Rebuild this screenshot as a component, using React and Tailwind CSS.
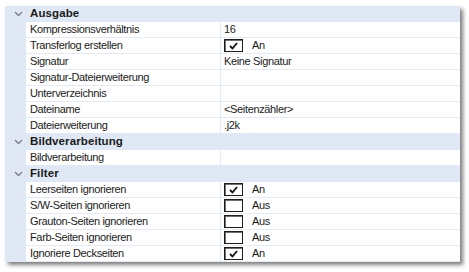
const SECTIONS = [
  {
    title: 'Ausgabe',
    rows: [
      { name: 'Kompressionsverhältnis', value: '16' },
      { name: 'Transferlog erstellen', check: true },
      { name: 'Signatur', value: 'Keine Signatur' },
      { name: 'Signatur-Dateierweiterung', value: '' },
      { name: 'Unterverzeichnis', value: '' },
      { name: 'Dateiname', value: '<Seitenzähler>' },
      { name: 'Dateierweiterung', value: '.j2k' },
    ],
  },
  {
    title: 'Bildverarbeitung',
    rows: [{ name: 'Bildverarbeitung', value: '' }],
  },
  {
    title: 'Filter',
    rows: [
      { name: 'Leerseiten ignorieren', check: true },
      { name: 'S/W-Seiten ignorieren', check: false },
      { name: 'Grauton-Seiten ignorieren', check: false },
      { name: 'Farb-Seiten ignorieren', check: false },
      { name: 'Ignoriere Deckseiten', check: true },
    ],
  },
];

const Chevron = () => (
  <svg width="9" height="6" viewBox="0 0 9 6" fill="none" stroke="#7a7f88" strokeWidth="1.3">
    <path d="M1 1l3.5 3.5L8 1" />
  </svg>
);

const CheckBox = ({ on }) => (
  <span className="flex items-center">
    <span className="w-[19px] h-[13px] border border-[#1c1c1c] shadow-[inset_1px_1px_0_#6e6e6e] bg-white flex items-center pl-[4px]">
      {on && (
        <svg width="9" height="8" viewBox="0 0 9 8">
          <path d="M1 4l2.5 2.5L8 1" fill="none" stroke="#111" strokeWidth="1.8" />
        </svg>
      )}
    </span>
    <span className="ml-[9px]">{on ? 'An' : 'Aus'}</span>
  </span>
);

export default function App() {
  return (
    <div className="w-[469px] h-[272px] bg-white pt-[6px] pl-[5px]" style={{ fontFamily: '"Liberation Sans", Arial, sans-serif' }}>
      <div className="w-[455px] bg-[#dfe8f4] shadow-[3px_3px_4px_rgba(0,0,0,0.5)] text-[11px] text-[#1a1a1a] leading-none">
        {SECTIONS.map((s) => (
          <div key={s.title}>
            <div className="h-4 flex items-center">
              <span className="w-[25px] flex justify-center pl-[2px]">
                <Chevron />
              </span>
              <span className="font-bold text-[11.5px] tracking-[0.1px]">{s.title}</span>
            </div>
            {s.rows.map((r) => (
              <div key={r.name} className="h-4 flex">
                <span className="w-[21px] shrink-0" />
                <div className="flex-1 flex bg-white border-b border-[#e2eaf5]">
                  <span className="w-[195px] shrink-0 pl-[4px] flex items-center border-r border-[#e2eaf5] tracking-[-0.35px]">
                    {r.name}
                  </span>
                  <span className="flex-1 pl-[3px] flex items-center tracking-[-0.35px]">
                    {'check' in r ? <CheckBox on={r.check} /> : r.value}
                  </span>
                </div>
              </div>
            ))}
          </div>
        ))}
      </div>
    </div>
  );
}
